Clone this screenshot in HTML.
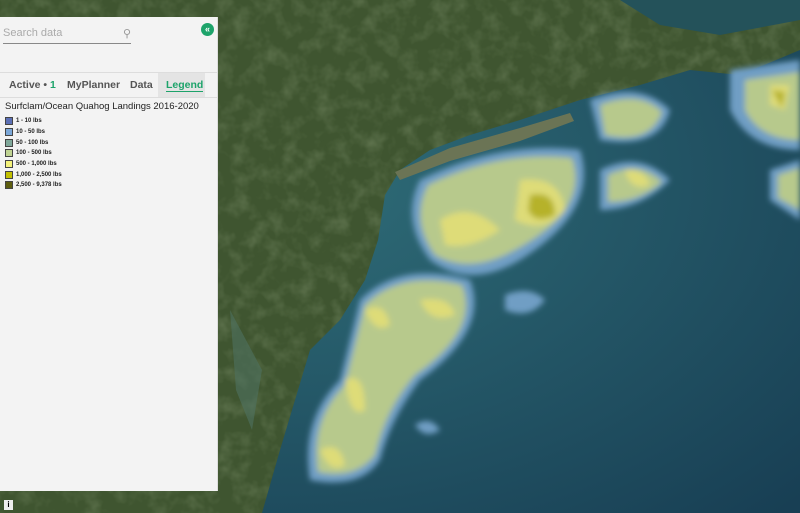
<!DOCTYPE html>
<html><head><meta charset="utf-8"><style>
body{margin:0;width:800px;height:513px;overflow:hidden;font-family:"Liberation Sans",sans-serif;position:relative;background:#1e4a5c}
#map{position:absolute;left:0;top:0}
#panel{position:absolute;left:0;top:17px;width:217px;height:474px;background:#f3f3f3;border-right:1px solid #ddd}
.search{position:absolute;left:3px;top:10px;width:128px;border-bottom:1px solid #888;height:16px;font-size:11px;color:#aaa}
.tabs{position:absolute;left:0;top:55px;width:217px;height:24px;border-top:1px solid #ddd;border-bottom:1px solid #ddd;font-size:10.5px;font-weight:bold;color:#555}
.tabs span{position:absolute;top:6px}
.leg{position:absolute;left:5px;top:84px;font-size:9.5px;color:#222}
.row{display:flex;align-items:center;height:10.7px;font-size:6px;font-weight:bold}
.sw{width:8px;height:8px;border:1px solid #444;margin-right:3px;box-sizing:border-box}
</style></head><body>
<svg id="map" width="800" height="513">
<defs><filter id="b"><feGaussianBlur stdDeviation="3"/></filter>
<filter id="n"><feTurbulence type="fractalNoise" baseFrequency="0.06" numOctaves="3" seed="3"/><feColorMatrix values="0 0 0 0 0.25  0 0 0 0 0.33  0 0 0 0 0.18  0 0 0 1.2 -0.5"/></filter>
<radialGradient id="oc" cx="0.35" cy="0.35" r="0.9"><stop offset="0" stop-color="#2f6d78"/><stop offset="1" stop-color="#183f54"/></radialGradient></defs>
<rect width="800" height="513" fill="url(#oc)"/>
<path d="M560,0 L800,0 L800,50 L740,75 L690,70 L640,85 L580,100 L520,120 L470,135 L430,150 L400,170 L385,195 L378,240 L365,280 L340,320 L310,350 L295,400 L280,450 L262,513 L0,513 L0,0 Z" fill="#3f5530"/>
<rect width="800" height="513" filter="url(#n)" clip-path="url(#lc)" opacity="0.6"/>
<clipPath id="lc"><path d="M560,0 L800,0 L800,50 L740,75 L690,70 L640,85 L580,100 L520,120 L470,135 L430,150 L400,170 L385,195 L378,240 L365,280 L340,320 L310,350 L295,400 L280,450 L262,513 L0,513 L0,0 Z"/></clipPath>
<path d="M560,0 L620,0 L660,25 L720,35 L800,20 L800,0 Z" fill="#24525a"/>
<path d="M395,172 L450,148 L520,128 L570,113 L574,121 L520,141 L450,161 L400,180 Z" fill="#6b7455"/>
<path d="M230,310 L262,370 L252,430 L236,390 Z" fill="#4f7260" opacity="0.6"/>
<g filter="url(#b)">
<path d="M420,180 Q500,140 580,150 Q600,210 520,260 Q470,290 430,260 Q400,220 420,180Z M360,300 Q400,260 470,280 Q490,330 420,380 Q390,420 380,460 Q360,490 310,480 Q300,420 340,380Z M590,100 Q640,80 670,110 Q660,150 600,140Z M600,170 Q640,150 670,180 Q640,210 600,210Z M730,70 L800,60 L800,150 Q750,150 730,110Z M770,170 L800,160 L800,220 L770,200Z M505,295 Q530,285 545,300 Q530,320 505,310Z M415,425 Q430,415 440,430 Q425,440 415,425Z" fill="#6f9ec4"/>
<path d="M428,185 Q500,150 572,158 Q590,210 515,250 Q470,275 435,255 Q410,220 428,185Z M365,305 Q400,270 462,285 Q480,330 415,375 Q385,410 375,455 Q355,480 318,472 Q310,420 345,385Z M600,105 Q640,90 662,112 Q650,145 605,135Z M608,175 Q640,160 662,182 Q640,202 608,202Z M745,80 L800,72 L800,140 Q760,140 745,110Z M778,175 L800,168 L800,210 L778,198Z" fill="#b7c98c"/>
<path d="M520,180 Q560,175 565,210 Q545,235 515,220Z M440,220 Q470,200 500,230 Q470,250 445,245Z M420,300 Q450,295 455,315 Q430,325 420,300Z M365,310 Q385,300 390,325 Q375,335 365,310Z M345,380 Q365,370 365,410 Q350,420 345,380Z M320,450 Q340,440 345,465 Q330,475 320,450Z M625,170 Q645,168 650,185 Q630,192 625,170Z M770,85 L790,85 L785,110 L770,105Z" fill="#dedc78"/>
<path d="M530,195 Q555,190 555,215 Q535,225 528,210Z M772,90 L785,92 L782,108 Z" fill="#b6b22a"/>
</g>
</svg>
<div id="panel">
<div class="search">Search data<span style="position:absolute;right:0;top:0;color:#999">&#9906;</span></div>
<div style="position:absolute;left:201px;top:6px;width:13px;height:13px;border-radius:50%;background:#1da36a;color:#fff;font-size:9px;line-height:13px;text-align:center;font-weight:bold">«</div>
<div class="tabs"><span style="left:9px">Active • <b style="color:#1da36a">1</b></span><span style="left:67px">MyPlanner</span><span style="left:130px">Data</span>
<div style="position:absolute;left:158px;top:0;width:47px;height:24px;background:#e4e4e4"></div><span style="left:166px;color:#1da36a;border-bottom:1px solid #1da36a">Legend</span></div>
<div class="leg"><div style="margin-bottom:4px">Surfclam/Ocean Quahog Landings 2016-2020</div>
<div class="row"><div class="sw" style="background:#5b6fb5"></div>1 - 10 lbs</div>
<div class="row"><div class="sw" style="background:#7ba7d8"></div>10 - 50 lbs</div>
<div class="row"><div class="sw" style="background:#7fa89a"></div>50 - 100 lbs</div>
<div class="row"><div class="sw" style="background:#bfd392"></div>100 - 500 lbs</div>
<div class="row"><div class="sw" style="background:#f4f27a"></div>500 - 1,000 lbs</div>
<div class="row"><div class="sw" style="background:#c2c000"></div>1,000 - 2,500 lbs</div>
<div class="row"><div class="sw" style="background:#5e5e10"></div>2,500 - 9,378 lbs</div>
</div></div>
<div style="position:absolute;left:4px;top:500px;width:9px;height:10px;background:#eee;font-size:8px;text-align:center;line-height:10px;font-weight:bold">i</div>
</body></html>
